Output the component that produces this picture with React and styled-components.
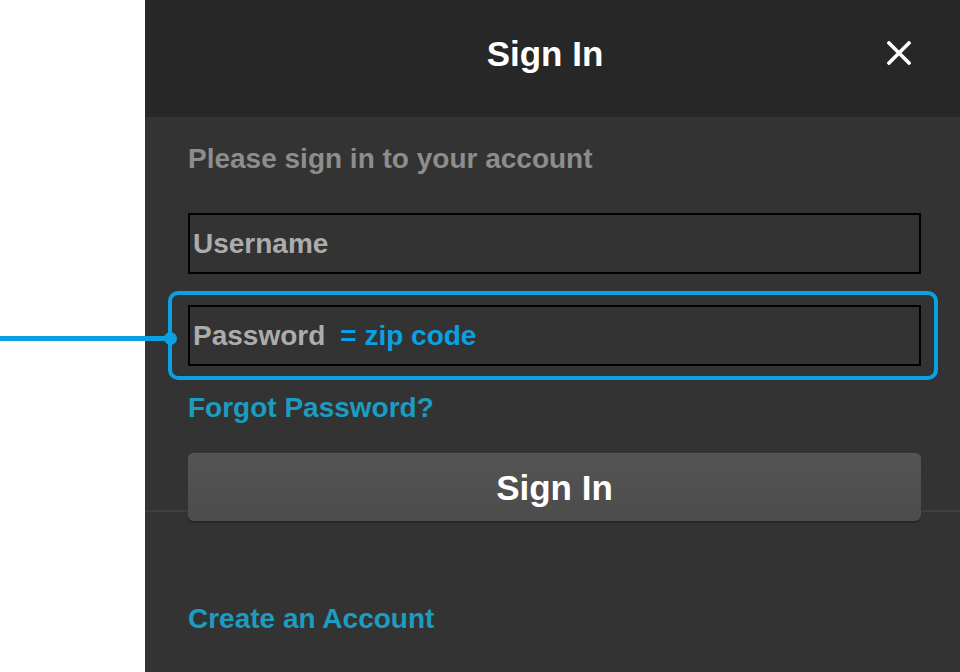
import React from 'react';
import styled, { createGlobalStyle } from 'styled-components';

const GlobalStyle = createGlobalStyle`
  html, body {
    margin: 0;
    padding: 0;
    background: #ffffff;
  }
  body {
    font-family: "Liberation Sans", Arial, Helvetica, sans-serif;
  }
`;

const Page = styled.div`
  display: flex;
  width: 960px;
  height: 672px;
  overflow: hidden;
`;

const Gutter = styled.div`
  width: 145px;
  flex-shrink: 0;
  background: #ffffff;
`;

const Panel = styled.div`
  flex: 1;
  display: flex;
  flex-direction: column;
  background: #333333;
`;

const Header = styled.header`
  height: 117px;
  box-sizing: border-box;
  padding: 36px 49px 0 34px;
  background: #272727;
  display: grid;
  grid-template-columns: 1fr auto 1fr;
  align-items: start;
`;

const Title = styled.h1`
  grid-column: 2;
  margin: 0;
  font-size: 35px;
  line-height: 35px;
  font-weight: 700;
  color: #ffffff;
`;

const CloseButton = styled.button`
  grid-column: 3;
  justify-self: end;
  margin-top: 5px;
  padding: 0;
  width: 24px;
  height: 24px;
  border: none;
  background: none;
  cursor: pointer;
  display: flex;
`;

const FormSection = styled.section`
  display: flex;
  flex-direction: column;
  padding: 28px 39px 0 43px;
  border-bottom: 2px solid #3f3f3f;
`;

const Intro = styled.p`
  margin: 0;
  font-size: 28px;
  line-height: 28px;
  font-weight: 700;
  color: #8d8d8d;
`;

const Field = styled.div`
  height: 61px;
  box-sizing: border-box;
  border: 2px solid #000000;
  padding: 0 0 0 3px;
  display: flex;
  align-items: center;
  gap: 15px;
  margin-top: ${(p) => p.$top || 0}px;
`;

const FieldLabel = styled.span`
  font-size: 28px;
  line-height: 28px;
  font-weight: 700;
  color: ${(p) => (p.$hint ? '#0aa0e2' : '#acacac')};
`;

const Highlight = styled.div`
  position: relative;
  margin: 17px -17px 0 -20px;
  padding: 10px 13px 10px 16px;
  border: 4px solid #0aa0e2;
  border-radius: 10px;
`;

const Leader = styled.span`
  position: absolute;
  left: -172px;
  top: 41px;
  width: 172px;
  height: 5px;
  background: #0aa0e2;
`;

const LeaderDot = styled.span`
  position: absolute;
  left: -8.5px;
  top: 37px;
  width: 13px;
  height: 13px;
  border-radius: 50%;
  background: #0aa0e2;
`;

const TextLink = styled.a`
  display: block;
  font-size: 28px;
  line-height: 28px;
  font-weight: 700;
  color: #1b9cc0;
  text-decoration: none;
  margin-top: ${(p) => p.$top}px;
`;

const SubmitButton = styled.button`
  position: relative;
  margin: 31px 0 -11px;
  height: 68px;
  border: none;
  border-top: 1px solid #5a5a5a;
  border-radius: 6px;
  background: linear-gradient(#545454, #4c4c4c);
  box-shadow: 0 2px 0 #262626;
  font-family: inherit;
  font-size: 35px;
  line-height: 35px;
  font-weight: 700;
  color: #ffffff;
  display: flex;
  align-items: center;
  justify-content: center;
  cursor: pointer;
`;

const FooterSection = styled.section`
  padding: 93px 43px 0;
`;

const CloseIcon = () => (
  <svg width="24" height="24" viewBox="0 0 24 24">
    <path d="M2 2 L22 22 M22 2 L2 22" stroke="#ffffff" strokeWidth="3.6" strokeLinecap="square" />
  </svg>
);

export default function App() {
  return (
    <>
      <GlobalStyle />
      <Page>
        <Gutter />
        <Panel>
          <Header>
            <Title>Sign In</Title>
            <CloseButton aria-label="Close">
              <CloseIcon />
            </CloseButton>
          </Header>
          <FormSection>
            <Intro>Please sign in to your account</Intro>
            <Field $top={40}>
              <FieldLabel>Username</FieldLabel>
            </Field>
            <Highlight>
              <Leader />
              <LeaderDot />
              <Field>
                <FieldLabel>Password</FieldLabel>
                <FieldLabel $hint>= zip code</FieldLabel>
              </Field>
            </Highlight>
            <TextLink href="#" $top={14}>Forgot Password?</TextLink>
            <SubmitButton>Sign In</SubmitButton>
          </FormSection>
          <FooterSection>
            <TextLink href="#" $top={0}>Create an Account</TextLink>
          </FooterSection>
        </Panel>
      </Page>
    </>
  );
}
